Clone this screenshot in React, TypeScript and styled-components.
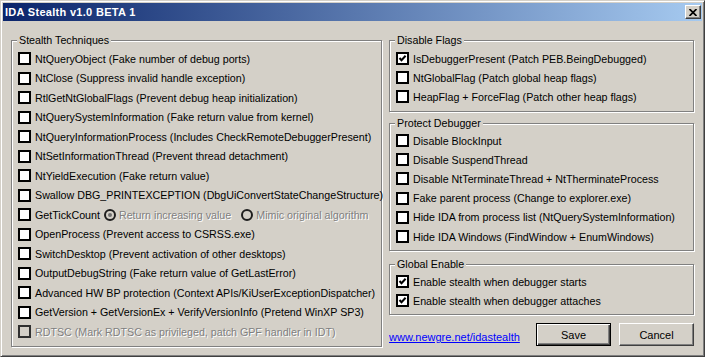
import styled, { createGlobalStyle } from 'styled-components';

const GlobalStyle = createGlobalStyle`
  html, body {
    margin: 0;
    padding: 0;
    background: #d4d0c8;
  }
  body {
    font-family: "Liberation Sans", Arial, sans-serif;
    font-size: 10.7px;
    color: #000;
  }
  * {
    box-sizing: border-box;
  }
`;

const Window = styled.div`
  width: 705px;
  height: 357px;
  background: #d4d0c8;
  border: 1px solid;
  border-color: #d4d0c8 #404040 #404040 #d4d0c8;
  box-shadow: inset 1px 1px #fff, inset -1px -1px #808080;
  padding: 2px;
  display: flex;
  flex-direction: column;
`;

const TitleBar = styled.div`
  height: 18px;
  flex-shrink: 0;
  display: flex;
  align-items: center;
  justify-content: space-between;
  padding: 0 1px 0 2px;
  background: linear-gradient(to right, #0a246a, #a6caf0);
`;

const Title = styled.span`
  color: #fff;
  font-weight: bold;
  font-size: 11px;
  letter-spacing: 0.3px;
  line-height: 14px;
`;

const RaisedButton = styled.button`
  font-family: inherit;
  font-size: 11px;
  color: #000;
  background: #d4d0c8;
  border: 1px solid;
  border-color: #fff #404040 #404040 #fff;
  box-shadow: inset -1px -1px #808080, inset 1px 1px #d4d0c8;
  padding: 0;
  display: flex;
  align-items: center;
  justify-content: center;
`;

const CloseButton = styled(RaisedButton)`
  width: 16px;
  height: 14px;
`;

const Body = styled.div`
  flex: 1;
  display: flex;
  gap: 7px;
  padding: 19px 7px 0 8px;
`;

const GroupBox = styled.div<{ $height: number; $pad: number; $mt?: number }>`
  position: relative;
  height: ${({ $height }) => $height}px;
  margin-top: ${({ $mt }) => $mt ?? 0}px;
  border: 1px solid #808080;
  box-shadow: 1px 1px 0 #fff, inset 1px 1px 0 #fff;
  padding: ${({ $pad }) => $pad}px 6px 0 6px;
  flex-shrink: 0;
`;

const Caption = styled.span`
  position: absolute;
  top: -8px;
  left: 5px;
  padding: 0 2px;
  line-height: 14px;
  background: #d4d0c8;
`;

const LeftGroup = styled(GroupBox)`
  width: 371px;
`;

const RightColumn = styled.div`
  width: 305px;
  display: flex;
  flex-direction: column;
`;

const Row = styled.div<{ $h: number }>`
  height: ${({ $h }) => $h}px;
  display: flex;
  align-items: center;
  white-space: nowrap;
`;

const Box = styled.span<{ $disabled?: boolean }>`
  width: 13px;
  height: 13px;
  flex-shrink: 0;
  border: 2px solid ${({ $disabled }) => ($disabled ? '#303030' : '#000')};
  background: ${({ $disabled }) => ($disabled ? '#d4d0c8' : '#fff')};
  display: flex;
  align-items: center;
  justify-content: center;
  margin-right: 4px;
`;

const Label = styled.span<{ $disabled?: boolean }>`
  line-height: 14px;
  color: ${({ $disabled }) => ($disabled ? '#808080' : '#000')};
  text-shadow: ${({ $disabled }) => ($disabled ? '1px 1px 0 #fff' : 'none')};
`;

const RadioOption = styled.span<{ $ml: number }>`
  display: flex;
  align-items: center;
  margin-left: ${({ $ml }) => $ml}px;
`;

const RadioCircle = styled.span`
  width: 12px;
  height: 12px;
  border-radius: 50%;
  border: 2px solid #1e1e1e;
  background: #d4d0c8;
  display: flex;
  align-items: center;
  justify-content: center;
  margin-right: 3px;
`;

const RadioDot = styled.span`
  width: 4px;
  height: 4px;
  border-radius: 50%;
  background: #6e6e6e;
`;

const Footer = styled.div`
  display: flex;
  align-items: center;
  margin-top: 8px;
`;

const Link = styled.a`
  color: #0000ff;
  font-size: 11px;
  text-decoration: underline;
  padding-top: 5px;
  margin-right: auto;
`;

const DialogButton = styled(RaisedButton)<{ $default?: boolean }>`
  width: 75px;
  height: 23px;
  margin-left: ${({ $default }) => ($default ? 0 : 8)}px;
  ${({ $default }) =>
    $default &&
    `
    border: 1px solid #000;
    box-shadow: inset 1px 1px #fff, inset -1px -1px #404040, inset -2px -2px #808080;
  `}
`;

const CheckMark = () => (
  <svg width="9" height="9" viewBox="0 0 9 9">
    <path d="M1.5 4 L3.5 6.2 L7.6 1.8" fill="none" stroke="#000" strokeWidth="2" />
  </svg>
);

const Check = ({
  label,
  checked,
  disabled,
  h,
}: {
  label: string;
  checked?: boolean;
  disabled?: boolean;
  h: number;
}) => (
  <Row $h={h}>
    <Box $disabled={disabled}>{checked && <CheckMark />}</Box>
    <Label $disabled={disabled}>{label}</Label>
  </Row>
);

const stealthItems = [
  'NtQueryObject (Fake number of debug ports)',
  'NtClose (Suppress invalid handle exception)',
  'RtlGetNtGlobalFlags (Prevent debug heap initialization)',
  'NtQuerySystemInformation (Fake return value from kernel)',
  'NtQueryInformationProcess (Includes CheckRemoteDebuggerPresent)',
  'NtSetInformationThread (Prevent thread detachment)',
  'NtYieldExecution (Fake return value)',
  'Swallow DBG_PRINTEXCEPTION (DbgUiConvertStateChangeStructure)',
];

const stealthItems2 = [
  'OpenProcess (Prevent access to CSRSS.exe)',
  'SwitchDesktop (Prevent activation of other desktops)',
  'OutputDebugString (Fake return value of GetLastError)',
  'Advanced HW BP protection (Context APIs/KiUserExceptionDispatcher)',
  'GetVersion + GetVersionEx + VerifyVersionInfo (Pretend WinXP SP3)',
];

const protectItems = [
  'Disable BlockInput',
  'Disable SuspendThread',
  'Disable NtTerminateThread + NtTherminateProcess',
  'Fake parent process (Change to explorer.exe)',
  'Hide IDA from process list (NtQuerySystemInformation)',
  'Hide IDA Windows (FindWindow + EnumWindows)',
];

const LEFT_ROW = 19.5;

export default function App() {
  return (
    <>
      <GlobalStyle />
      <Window>
        <TitleBar>
          <Title>IDA Stealth v1.0 BETA 1</Title>
          <CloseButton aria-label="Close">
            <svg width="8" height="7" viewBox="0 0 8 7">
              <path d="M0.5 0 L7.5 7 M7.5 0 L0.5 7" stroke="#000" strokeWidth="1.7" />
            </svg>
          </CloseButton>
        </TitleBar>
        <Body>
          <LeftGroup $height={307} $pad={8}>
            <Caption>Stealth Techniques</Caption>
            {stealthItems.map((t) => (
              <Check key={t} label={t} h={LEFT_ROW} />
            ))}
            <Row $h={LEFT_ROW}>
              <Box />
              <Label>GetTickCount</Label>
              <RadioOption $ml={4}>
                <RadioCircle>
                  <RadioDot />
                </RadioCircle>
                <Label $disabled>Return increasing value</Label>
              </RadioOption>
              <RadioOption $ml={10}>
                <RadioCircle />
                <Label $disabled>Mimic original algorithm</Label>
              </RadioOption>
            </Row>
            {stealthItems2.map((t) => (
              <Check key={t} label={t} h={LEFT_ROW} />
            ))}
            <Check label="RDTSC (Mark RDTSC as privileged, patch GPF handler in IDT)" disabled h={LEFT_ROW} />
          </LeftGroup>
          <RightColumn>
            <GroupBox $height={72} $pad={8}>
              <Caption>Disable Flags</Caption>
              <Check label="IsDebuggerPresent (Patch PEB.BeingDebugged)" checked h={19} />
              <Check label="NtGlobalFlag (Patch global heap flags)" h={19} />
              <Check label="HeapFlag + ForceFlag (Patch other heap flags)" h={19} />
            </GroupBox>
            <GroupBox $height={128} $pad={7} $mt={11}>
              <Caption>Protect Debugger</Caption>
              {protectItems.map((t) => (
                <Check key={t} label={t} h={19.2} />
              ))}
            </GroupBox>
            <GroupBox $height={51} $pad={7} $mt={13}>
              <Caption>Global Enable</Caption>
              <Check label="Enable stealth when debugger starts" checked h={19} />
              <Check label="Enable stealth when debugger attaches" checked h={19} />
            </GroupBox>
            <Footer>
              <Link href="#">www.newgre.net/idastealth</Link>
              <DialogButton $default>Save</DialogButton>
              <DialogButton>Cancel</DialogButton>
            </Footer>
          </RightColumn>
        </Body>
      </Window>
    </>
  );
}
